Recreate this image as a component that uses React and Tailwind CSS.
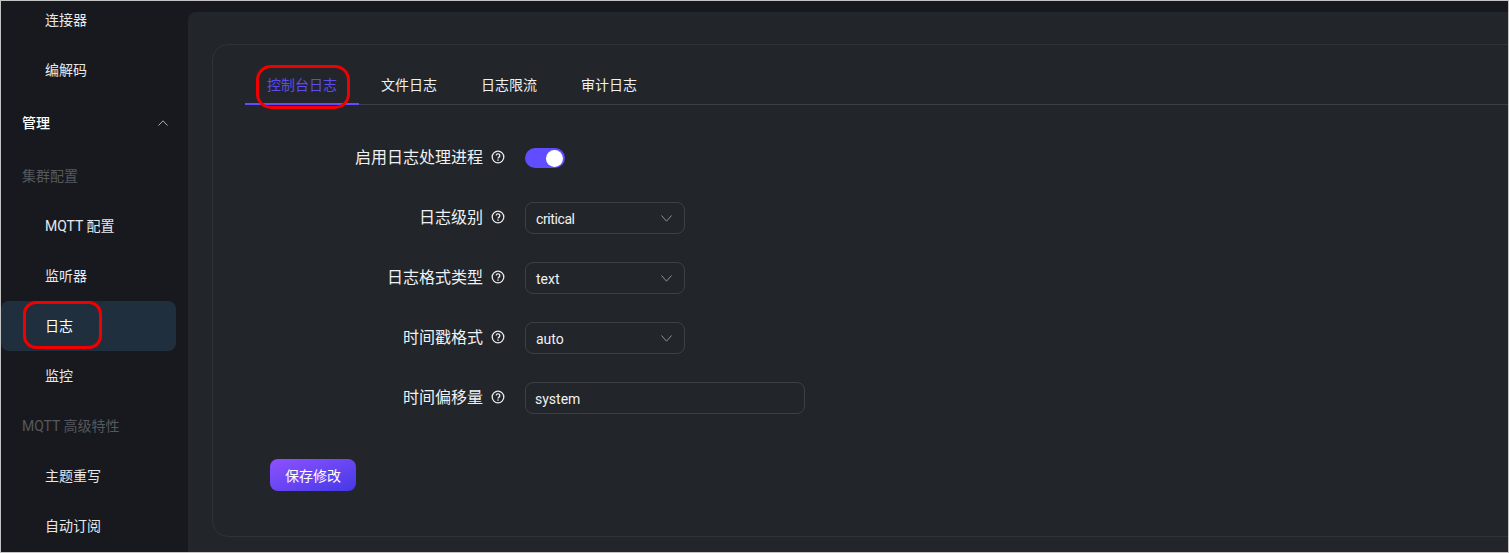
import React from "react";

function Chevron({ up = false, small = false, className = "" }) {
  const w = small ? 10 : 11;
  const h = small ? 5 : 6;
  return (
    <svg width={w} height={h + 1} viewBox={`0 0 ${w} ${h + 1}`} fill="none" className={className}>
      <path
        d={up ? `M0.5 ${h + 0.5} ${w / 2} 0.8 ${w - 0.5} ${h + 0.5}` : `M0.5 0.5 ${w / 2} ${h + 0.2} ${w - 0.5} 0.5`}
        stroke="currentColor"
        strokeWidth="1"
      />
    </svg>
  );
}

function Help() {
  return (
    <svg width="14" height="14" viewBox="0 0 14 14" fill="none" className="ml-[8px] -mt-[2px] shrink-0 text-[#eceded]">
      <circle cx="7" cy="7" r="5.8" stroke="currentColor" strokeWidth="1.3" />
      <path d="M5.2 5.6a1.8 1.8 0 1 1 2.8 1.5c-.6.4-1 .7-1 1.3" stroke="currentColor" strokeWidth="1.3" />
      <circle cx="7" cy="10.1" r="0.8" fill="currentColor" />
    </svg>
  );
}

function NavItem({ children, active }) {
  return (
    <div
      className={`h-[50px] flex items-center pl-[44px] mr-[12px] rounded-lg text-[#e6e8ea] ${active ? "bg-[#1f2f3e] text-white" : ""}`}
    >
      {children}
    </div>
  );
}

function Section({ children }) {
  return <div className="h-[50px] flex items-center pl-[21px] text-[#55585c]">{children}</div>;
}

function Row({ label, children }) {
  return (
    <div className="h-[60px] flex items-center">
      <div className="w-[260px] flex items-center justify-end text-[16px] text-[#f0f1f2]">
        <span>{label}</span>
        <Help />
      </div>
      <div className="ml-[20px]">{children}</div>
    </div>
  );
}

function Select({ value, textClass = "" }) {
  return (
    <div className="w-[160px] h-[32px] rounded-lg border border-[#3c3f44] flex items-center justify-between pl-[10px] pr-[12px] text-[#f0f1f2]">
      <span className={`pt-[2px] ${textClass}`}>{value}</span>
      <Chevron className="text-[#8d9095]" />
    </div>
  );
}

export default function App() {
  const tabs = ["文件日志", "日志限流", "审计日志"];
  return (
    <div className="relative w-[1509px] h-[553px] overflow-hidden border border-[#c4c4c4] bg-[#18191e] flex text-[14px] font-['Roboto','Noto_Sans_CJK_SC',sans-serif]">
      <aside className="w-[187px] shrink-0 overflow-hidden">
        <div className="-mt-[6px]">
          <NavItem>连接器</NavItem>
          <NavItem>编解码</NavItem>
          <div className="h-[56px] flex items-center justify-between pl-[21px] pr-[20px] font-medium text-white">
            <span>管理</span>
            <Chevron up small className="text-[#b0b2b5]" />
          </div>
          <Section>集群配置</Section>
          <NavItem>MQTT 配置</NavItem>
          <NavItem>监听器</NavItem>
          <NavItem active>日志</NavItem>
          <NavItem>监控</NavItem>
          <Section>MQTT 高级特性</Section>
          <NavItem>主题重写</NavItem>
          <NavItem>自动订阅</NavItem>
        </div>
      </aside>

      <main className="flex-1 min-w-0 mt-[11px] bg-[#22252a] rounded-tl-lg overflow-hidden pl-[24px] pt-[32px]">
        <div className="w-[1400px] h-[493px] rounded-2xl border border-[#2f3237] pl-[32px] pt-[16px]">
          <div className="flex h-[44px] border-b border-[#3c3f44]">
            <div className="relative px-[22px] h-[44px] pt-[4px] flex items-center text-[#5d4df0]">
              控制台日志
              <div className="absolute left-0 right-0 bottom-0 h-[2px] bg-[#5f4dff]" />
            </div>
            {tabs.map((t) => (
              <div key={t} className="px-[22px] h-[44px] pt-[4px] flex items-center text-[#f0f1f2]">
                {t}
              </div>
            ))}
          </div>

          <div className="mt-[23px]">
            <Row label="启用日志处理进程">
              <div className="w-[40px] h-[20px] rounded-full bg-[#5f4dff] flex items-center justify-end pr-[2px]">
                <div className="w-[17px] h-[17px] rounded-full bg-white" />
              </div>
            </Row>
            <Row label="日志级别"><Select value="critical" textClass="tracking-[-0.4px]" /></Row>
            <Row label="日志格式类型"><Select value="text" /></Row>
            <Row label="时间戳格式"><Select value="auto" /></Row>
            <Row label="时间偏移量">
              <div className="w-[280px] h-[32px] rounded-lg border border-[#3c3f44] flex items-center pl-[9px] pt-[2px] text-[#f0f1f2]">system</div>
            </Row>
          </div>

          <button className="mt-[31px] ml-[25px] w-[86px] h-[32px] pt-[2px] rounded-lg bg-gradient-to-br from-[#8f50ff] to-[#4338e6] text-white text-[14px]">
            保存修改
          </button>
        </div>
      </main>

      <div className="absolute left-[255px] top-[64px] w-[94px] h-[44px] rounded-[15px] border-[3px] border-[#f00000]" />
      <div className="absolute left-[22px] top-[300px] w-[79px] h-[48px] rounded-[13px] border-[3px] border-[#f00000]" />
    </div>
  );
}
